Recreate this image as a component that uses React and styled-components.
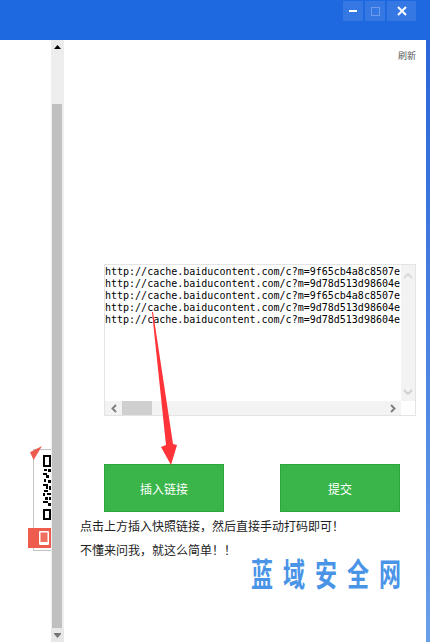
import React from 'react'
import styled, { createGlobalStyle } from 'styled-components'

const cjk = '"Noto Sans CJK SC", "Liberation Sans", sans-serif'

const urls = [
  'http://cache.baiducontent.com/c?m=9f65cb4a8c8507e',
  'http://cache.baiducontent.com/c?m=9d78d513d98604e',
  'http://cache.baiducontent.com/c?m=9f65cb4a8c8507e',
  'http://cache.baiducontent.com/c?m=9d78d513d98604e',
  'http://cache.baiducontent.com/c?m=9d78d513d98604e',
]

// the half visible qr code: two finder frames, modules between them
const qrCells = [
  [0, 0, 8, 2], [0, 2, 2, 8], [0, 10, 8, 2], [6, 2, 2, 8],
  [1, 14, 3, 2], [5, 14, 3, 3], [0, 18, 4, 2], [3, 20, 3, 3],
  [1, 24, 2, 3], [5, 25, 3, 3], [0, 29, 5, 2], [3, 31, 2, 3],
  [6, 31, 2, 4], [1, 35, 4, 2], [0, 38, 2, 3], [4, 38, 4, 2],
  [2, 42, 3, 3], [6, 42, 2, 3], [0, 46, 5, 2], [5, 48, 3, 3],
  [0, 54, 8, 2], [0, 56, 2, 7], [0, 63, 8, 2], [6, 56, 2, 7],
]

export default function App() {
  return (
    <>
      <GlobalStyle />
      <Window>
        <TitleBar>
          <WinButton>
            <svg width="8" height="2" viewBox="0 0 8 2"><rect width="8" height="2" fill="#fff" /></svg>
          </WinButton>
          <WinButton>
            <svg width="9" height="9" viewBox="0 0 9 9"><rect x="0.5" y="0.5" width="8" height="8" fill="none" stroke="#6e9cec" /></svg>
          </WinButton>
          <WinButton $wide>
            <svg width="10" height="10" viewBox="0 0 10 10"><path d="M1 1l8 8M9 1l-8 8" stroke="#fff" strokeWidth="2" /></svg>
          </WinButton>
        </TitleBar>
        <Body>
          <Gutter>
            <QrWidget>
              <RedCorner />
              <QrCode width="8" height="65" viewBox="0 0 8 65">
                {qrCells.map(([x, y, w, h], i) => <rect key={i} x={x} y={y} width={w} height={h} fill="#000" />)}
              </QrCode>
              <PhoneTab>
                <svg width="10" height="14" viewBox="0 0 10 14">
                  <rect width="10" height="14" rx="1" fill="#fff" />
                  <rect x="1.5" y="1.5" width="7" height="9.500" fill="#f0705f" />
                </svg>
              </PhoneTab>
            </QrWidget>
          </Gutter>
          <PageScrollbar>
            <ScrollArrow $dark>
              <svg width="7" height="4" viewBox="0 0 7 4"><path d="M3.5 0L7 4H0z" fill="#000" /></svg>
            </ScrollArrow>
            <ScrollThumb />
            <ScrollArrow>
              <svg width="7" height="5" viewBox="0 0 7 5"><path d="M0 0h7v1L3.5 5 0 1z" fill="#777" /></svg>
            </ScrollArrow>
          </PageScrollbar>
          <Main>
            <Refresh>刷新</Refresh>
            <LinkBox>
              <LinkRow>
                <Links>
                  {urls.map((url, i) => <div key={i}>{url}</div>)}
                </Links>
                <VTrack>
                  <svg width="10" height="6" viewBox="0 0 10 6"><path d="M1 5l4-4 4 4" fill="none" stroke="#d8d8d8" strokeWidth="2" /></svg>
                  <svg width="10" height="6" viewBox="0 0 10 6"><path d="M1 1l4 4 4-4" fill="none" stroke="#d0d0d0" strokeWidth="2" /></svg>
                </VTrack>
              </LinkRow>
              <HTrack>
                <HArrow>
                  <svg width="6" height="9" viewBox="0 0 6 9"><path d="M5 1L1.500 4.500 5 8" fill="none" stroke="#808080" strokeWidth="2" /></svg>
                </HArrow>
                <HThumb />
                <HArrow $end>
                  <svg width="6" height="9" viewBox="0 0 6 9"><path d="M1 1l3.500 3.500L1 8" fill="none" stroke="#808080" strokeWidth="2" /></svg>
                </HArrow>
                <Corner />
              </HTrack>
            </LinkBox>
            <Actions>
              <GreenButton>插入链接</GreenButton>
              <GreenButton>提交</GreenButton>
            </Actions>
            <Hint>
              <p>{'点击上方插入快照链接\uFF0C然后直接手动打码即可\uFF01'}</p>
              <p>{'不懂来问我\uFF0C就这么简单\uFF01\uFF01'}</p>
            </Hint>
            <Watermark>蓝域安全网</Watermark>
            <Arrow width="26" height="154" viewBox="0 0 26 154">
              <path d="M0 0L1 0L21 132L25 133L19 153L9 135L14 133Z" fill="#ff3338" />
            </Arrow>
          </Main>
          <EdgeStrip />
        </Body>
      </Window>
    </>
  )
}

const GlobalStyle = createGlobalStyle`
  html, body {
    margin: 0;
    padding: 0;
    background: #fff;
  }
`

const Window = styled.div`
  width: 430px;
  height: 642px;
  overflow: hidden;
  display: flex;
  flex-direction: column;
  font-family: ${cjk};
`

const TitleBar = styled.div`
  height: 40px;
  flex: none;
  box-sizing: border-box;
  background: #1f69e0;
  display: flex;
  justify-content: flex-end;
  align-items: flex-start;
  gap: 2px;
  padding: 1px 14px 0 0;
`

const WinButton = styled.div`
  width: ${p => (p.$wide ? '29px' : '20px')};
  height: 20px;
  background: rgba(255, 255, 255, 0.1);
  display: flex;
  align-items: center;
  justify-content: center;
`

const Body = styled.div`
  flex: 1;
  display: flex;
  min-height: 0;
`

const Gutter = styled.div`
  width: 51px;
  flex: none;
  display: flex;
  justify-content: flex-end;
  align-items: flex-start;
  padding-top: 409px;
  box-sizing: border-box;
`

const QrWidget = styled.div`
  position: relative;
  width: 18px;
  height: 102px;
  box-sizing: border-box;
  border: 1px solid #c4c4c4;
  border-right: none;
  background: #fff;
`

const RedCorner = styled.div`
  position: absolute;
  left: -4px;
  top: -4px;
  width: 12px;
  height: 14px;
  background: #ee5c4d;
  clip-path: polygon(0 45%, 100% 0, 30% 100%);
`

const QrCode = styled.svg`
  position: absolute;
  right: 0;
  top: 5px;
  display: block;
`

const PhoneTab = styled.div`
  position: absolute;
  left: -6px;
  right: 0;
  top: 78px;
  height: 20px;
  background: #ee5c4d;
  display: flex;
  align-items: center;
  justify-content: flex-end;
  padding-right: 2px;
`

const PageScrollbar = styled.div`
  width: 13px;
  flex: none;
  background: #eeeeee;
  display: flex;
  flex-direction: column;
  align-items: center;
`

const ScrollArrow = styled.div`
  height: 14px;
  flex: none;
  width: 100%;
  display: flex;
  align-items: center;
  justify-content: center;
  background: ${p => (p.$dark ? '#ececec' : '#e8e8e8')};
`

const ScrollThumb = styled.div`
  width: 10px;
  margin: 50px 1px 0 0;
  flex: 1;
  background: #c0c0c0;
`

const Main = styled.div`
  position: relative;
  flex: 1;
  min-width: 0;
  display: flex;
  flex-direction: column;
  background: #fff;
`

const Refresh = styled.div`
  align-self: flex-end;
  margin: 10px 10px 0 0;
  height: 12px;
  line-height: 12px;
  font-size: 9px;
  color: #555;
`

const LinkBox = styled.div`
  margin: 202px 0 0 40px;
  width: 312px;
  height: 152px;
  box-sizing: border-box;
  border: 1px solid #e4e4e4;
  display: flex;
  flex-direction: column;
  flex: none;
`

const LinkRow = styled.div`
  flex: 1;
  display: flex;
  min-height: 0;
`

const Links = styled.div`
  flex: 1;
  min-width: 0;
  overflow: hidden;
  white-space: nowrap;
  padding-top: 1px;
  font-family: "DejaVu Sans Mono", "Liberation Mono", monospace;
  font-size: 10px;
  line-height: 12px;
  color: #000;
`

const VTrack = styled.div`
  width: 14px;
  flex: none;
  background: #f3f3f3;
  display: flex;
  flex-direction: column;
  align-items: center;
  justify-content: space-between;
  padding: 8px 0 6px;
  box-sizing: border-box;
`

const HTrack = styled.div`
  height: 14px;
  flex: none;
  display: flex;
  background: #f3f3f3;
`

const HArrow = styled.div`
  width: 17px;
  flex: none;
  display: flex;
  align-items: center;
  justify-content: center;
  margin-left: ${p => (p.$end ? 'auto' : '0')};
`

const HThumb = styled.div`
  width: 30px;
  background: #cfcfcf;
`

const Corner = styled.div`
  width: 14px;
  flex: none;
  background: #fff;
`

const Actions = styled.div`
  margin: 48px 0 0 40px;
  width: 296px;
  display: flex;
  justify-content: space-between;
  flex: none;
`

const GreenButton = styled.div`
  width: 120px;
  height: 48px;
  box-sizing: border-box;
  border: 1px solid #2aa63c;
  background: #39b54a;
  color: #fff;
  font-size: 12px;
  display: flex;
  align-items: center;
  justify-content: center;
`

const Hint = styled.div`
  margin: 2px 0 0 16px;
  font-size: 12px;
  line-height: 24px;
  color: #222;

  p {
    margin: 0;
  }
`

const Watermark = styled.div`
  position: absolute;
  left: 187px;
  top: 516px;
  font-size: 22px;
  font-weight: 700;
  line-height: 32px;
  letter-spacing: 10px;
  white-space: nowrap;
  color: #4a94e8;
  transform: scaleY(1.45);
`

const Arrow = styled.svg`
  position: absolute;
  left: 88px;
  top: 272px;
`

const EdgeStrip = styled.div`
  width: 4px;
  flex: none;
  background: linear-gradient(#2a66d8, #6aa0ea);
`
